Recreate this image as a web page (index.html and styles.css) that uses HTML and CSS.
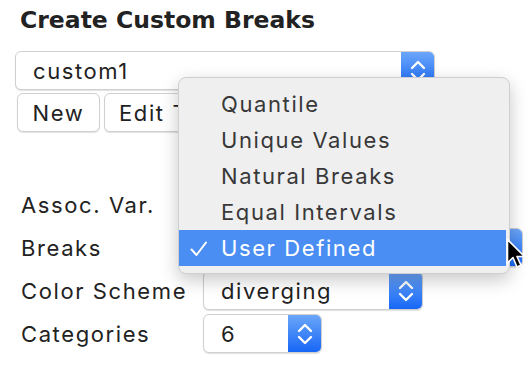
FILE: index.html
```html
<!DOCTYPE html>
<html>
<head>
<meta charset="utf-8">
<link rel="stylesheet" href="styles.css">
</head>
<body>
<div class="panel">
  <h1 class="title">Create Custom Breaks</h1>
  <div class="select wide">
    <span class="value">custom1</span>
    <span class="stepper"><svg width="16" height="24" viewBox="0 0 16 24"><path d="M2 9 L8 3 L14 9 M2 15 L8 21 L14 15" fill="none" stroke="#fff" stroke-width="2.4" stroke-linecap="round" stroke-linejoin="round"/></svg></span>
  </div>
  <div class="buttons">
    <button class="btn new">New</button>
    <button class="btn edit">Edit Title</button>
  </div>
  <div class="form">
    <span class="label">Assoc. Var.</span>
    <div class="select assoc"><span class="value"></span><span class="stepper"><svg width="16" height="24" viewBox="0 0 16 24"><path d="M2 9 L8 3 L14 9 M2 15 L8 21 L14 15" fill="none" stroke="#fff" stroke-width="2.4" stroke-linecap="round" stroke-linejoin="round"/></svg></span></div>
    <span class="label">Breaks</span>
    <div class="select breaks"><span class="value">User Defined</span><span class="stepper"><svg width="16" height="24" viewBox="0 0 16 24"><path d="M2 9 L8 3 L14 9 M2 15 L8 21 L14 15" fill="none" stroke="#fff" stroke-width="2.4" stroke-linecap="round" stroke-linejoin="round"/></svg></span></div>
    <span class="label">Color Scheme</span>
    <div class="select color"><span class="value">diverging</span><span class="stepper"><svg width="16" height="24" viewBox="0 0 16 24"><path d="M2 9 L8 3 L14 9 M2 15 L8 21 L14 15" fill="none" stroke="#fff" stroke-width="2.4" stroke-linecap="round" stroke-linejoin="round"/></svg></span></div>
    <span class="label">Categories</span>
    <div class="select cats"><span class="value">6</span><span class="stepper"><svg width="16" height="24" viewBox="0 0 16 24"><path d="M2 9 L8 3 L14 9 M2 15 L8 21 L14 15" fill="none" stroke="#fff" stroke-width="2.4" stroke-linecap="round" stroke-linejoin="round"/></svg></span></div>
  </div>
</div>
<ul class="menu">
  <li class="item">Quantile</li>
  <li class="item">Unique Values</li>
  <li class="item">Natural Breaks</li>
  <li class="item">Equal Intervals</li>
  <li class="item selected"><svg class="check" width="18" height="16" viewBox="0 0 18 16"><path d="M1.5 8.5 L6.5 14 L16 1.5" fill="none" stroke="#fff" stroke-width="2" stroke-linecap="round" stroke-linejoin="round"/></svg>User Defined</li>
</ul>
<svg class="cursor" width="22" height="34" viewBox="0 0 22 34"><path d="M1.5 1.5 L1.5 25 L7 19.5 L11 29 L15 27.3 L11 18.5 L18.5 18.5 Z" fill="#000" stroke="#fff" stroke-width="1.6" stroke-linejoin="round"/></svg>
</body>
</html>
```
FILE: styles.css
```css
* { box-sizing: border-box; }
html, body { margin: 0; padding: 0; background: #fff; }
body {
  width: 528px; height: 370px; overflow: hidden; position: relative;
  font-family: "Inter", "Liberation Sans", sans-serif;
  color: #222;
  font-size: 22px;
  letter-spacing: 1.6px;
}
.panel { padding: 6px 0 0 15px; }
.title {
  margin: 0 0 0 5px;
  font-family: "DejaVu Sans", "Liberation Sans", sans-serif;
  font-weight: 700; font-size: 23.5px; line-height: 28px;
  color: #222;
  letter-spacing: 0;
}
.select {
  display: flex; align-items: stretch;
  height: 39px; background: #fff;
  border: 1px solid #d0d0d0; border-radius: 6px;
  box-shadow: 0 1px 1px rgba(0,0,0,0.12);
  overflow: hidden;
}
.select .value { flex: 1; padding-left: 17px; display: flex; align-items: center; line-height: 1; }
.stepper {
  width: 33px; flex: none;
  background: linear-gradient(#6ba6f9, #1767f6);
  display: flex; align-items: center; justify-content: center;
}
.wide { width: 420px; margin-top: 17px; }
.buttons { display: flex; gap: 4px; margin-top: 3px; padding-left: 2px; }
.btn {
  font: inherit; color: #222; letter-spacing: inherit;
  height: 39px; background: #fff;
  border: 1px solid #d0d0d0; border-radius: 6px;
  box-shadow: 0 1px 1px rgba(0,0,0,0.12);
  padding: 0 14px;
}
.new { width: 83px; }
.form {
  display: grid; grid-template-columns: 182px auto; justify-items: start;
  row-gap: 4px; margin-top: 53px; padding-left: 6px; align-items: center;
}
.label { line-height: 1; }
.assoc { width: 280px; }
.breaks { width: 320px; }
.color { width: 220px; }
.cats { width: 119px; }
.menu {
  position: absolute; left: 178px; top: 77px; width: 332px; height: 197px;
  margin: 0; padding: 8px 0 0; list-style: none;
  background: #efeff0;
  border: 1px solid #cfcfd1; border-radius: 8px;
  box-shadow: 0 6px 18px rgba(0,0,0,0.22);
  overflow: hidden;
}
.item {
  height: 36px; padding-left: 42px; position: relative;
  display: flex; align-items: center; color: #383838;
}
.item.selected { background: #4a8ef3; color: #fff; margin-right: 3px; }
.check { position: absolute; left: 11px; top: 11px; }
.cursor { position: absolute; left: 506px; top: 238px; }
```
